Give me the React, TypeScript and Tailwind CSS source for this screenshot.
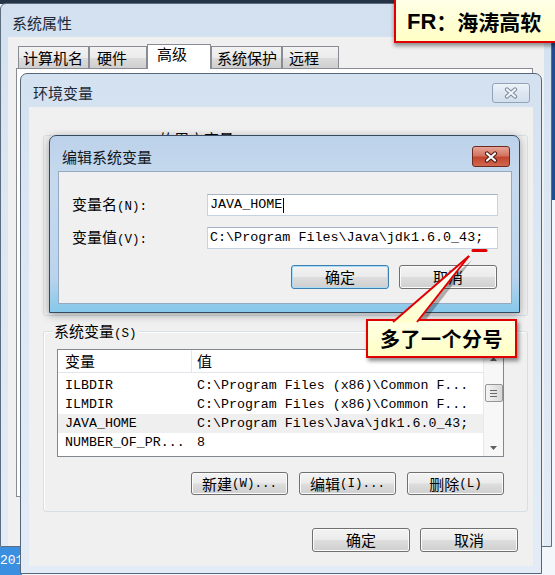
import type { ReactNode } from "react";

const cjk = "font-['Noto_Sans_CJK_SC',sans-serif]";
const mono = "font-['Liberation_Mono','Noto_Sans_CJK_SC',monospace]";

// splits a label into CJK runs and ASCII runs, ASCII gets the narrow mono face
function Txt({ s, lat = "text-[12.5px]" }: { s: string; lat?: string }) {
  const parts = s.match(/[\x00-\x7f]+|[^\x00-\x7f]+/g) ?? [];
  return (
    <>
      {parts.map((p, i) =>
        p.charCodeAt(0) < 128 ? (
          <span key={i} className={`${mono} ${lat} whitespace-pre`}>
            {p}
          </span>
        ) : (
          <span key={i}>{p}</span>
        )
      )}
    </>
  );
}

function Btn({
  label,
  className = "",
  focus = false,
}: {
  label: string;
  className?: string;
  focus?: boolean;
}) {
  return (
    <button
      className={`flex items-center justify-center rounded-[3px] border leading-[18px] text-black bg-[linear-gradient(180deg,#f3f3f3_0%,#ebebeb_48%,#dddddd_52%,#cfcfcf_100%)] ${
        focus
          ? "border-[#3c7fb1] shadow-[inset_0_0_0_1px_#a9dcf6]"
          : "border-[#707070] shadow-[inset_0_0_0_1px_#fbfbfb]"
      } ${className}`}
    >
      <Txt s={label} />
    </button>
  );
}

function CloseX({ active }: { active: boolean }) {
  const d = "M3 2.5 L11 9.5 M11 2.5 L3 9.5";
  return (
    <svg width="14" height="12" viewBox="0 0 14 12">
      <path d={d} stroke={active ? "#4b170c" : "#7d8a9b"} strokeWidth="4.2" strokeLinecap="round" />
      <path d={d} stroke={active ? "#ffffff" : "#f3f6fa"} strokeWidth="2.2" strokeLinecap="round" />
    </svg>
  );
}

function Tab({ children, w, pl, selected = false }: { children: ReactNode; w: string; pl: string; selected?: boolean }) {
  return (
    <div
      className={`${w} ${pl} border border-b-0 border-[#898c95] ${
        selected
          ? "relative z-10 -mb-px h-[25px] bg-white leading-[18px]"
          : "h-[22px] bg-[linear-gradient(180deg,#f2f2f2_0%,#ebebeb_50%,#dddddd_51%,#cfcfcf_100%)] pt-[1px] leading-[20px]"
      }`}
    >
      {children}
    </div>
  );
}

function Arrow({ up }: { up: boolean }) {
  return (
    <svg width="7" height="4" viewBox="0 0 7 4">
      <path d={up ? "M0 4 L3.5 0 L7 4Z" : "M0 0 L3.5 4 L7 0Z"} fill="#5f5f5f" />
    </svg>
  );
}

const ROWS = [
  ["ILBDIR", "C:\\Program Files (x86)\\Common F..."],
  ["ILMDIR", "C:\\Program Files (x86)\\Common F..."],
  ["JAVA_HOME", "C:\\Program Files\\Java\\jdk1.6.0_43;"],
  ["NUMBER_OF_PR...", "8"],
];

export default function App() {
  return (
    <div className={`relative h-[575px] w-[555px] overflow-hidden bg-[#f3f6fa] text-[15px] text-black ${cjk}`}>
      {/* desktop fragments */}
      <div className="absolute left-0 top-0 h-[4px] w-full bg-[#263447]" />
      <div className="absolute right-0 top-0 h-[200px] w-[4px] bg-[#1f4f8e]" />
      <div className="absolute left-0 top-[547px] flex h-[28px] w-[22px] items-center bg-[#3b8fe0] text-white">
        <span className={`${mono} text-[13px]`}>201</span>
      </div>

      {/* 系统属性 */}
      <div className="absolute left-0 top-[3px] flex h-[544px] w-[552px] flex-col rounded-t-[6px] border border-[#5d6d80] bg-[linear-gradient(180deg,#d2e0ef_0%,#dbe6f3_30%,#e2ebf6_100%)]">
        <div className="h-[33px] pl-[11px] pt-[9px] leading-[20px] text-[#1d2836]">系统属性</div>
        <div className="mx-[7px] flex-1 bg-[#f0f0f0] pt-[7px]">
          <div className="ml-[10px] flex h-[24px] items-end">
            <Tab w="w-[71px]" pl="pl-[4px]">计算机名</Tab>
            <Tab w="w-[58px]" pl="pl-[7px]">硬件</Tab>
            <Tab w="w-[64px]" pl="pl-[9px]" selected>
              高级
            </Tab>
            <Tab w="w-[71px]" pl="pl-[5px]">系统保护</Tab>
            <Tab w="w-[57px]" pl="pl-[6px]">远程</Tab>
          </div>
          <div className="ml-[8px] h-[429px] w-[517px] border border-[#898c95] bg-white" />
        </div>
      </div>

      {/* 环境变量 */}
      <div className="absolute left-[20px] top-[73px] flex h-[501px] w-[522px] flex-col rounded-t-[7px] border border-[#56677b] bg-[linear-gradient(180deg,#d3e1f0_0%,#dce7f4_35%,#e3ecf6_100%)]">
        <div className="relative h-[33px] pl-[12px] pt-[9px] leading-[20px] text-[#1d2836]">
          环境变量
          <div className="absolute right-[11px] top-[9px] flex h-[20px] w-[38px] items-center justify-center rounded-[3px] border border-[#93a3b7] bg-[linear-gradient(180deg,#eef3f9_0%,#dde7f2_50%,#d2dfec_100%)]">
            <CloseX active={false} />
          </div>
        </div>
        <div className="mx-[8px] flex h-[459px] flex-col bg-[#f0f0f0]">
          {/* user variables, mostly under the edit dialog */}
          <div className="relative ml-[14px] mt-[28px] h-[181px] w-[485px] rounded-[3px] border border-[#d5dfe5]">
            <span className="absolute -top-[6px] left-[8px] bg-[#f0f0f0] px-[2px] leading-[18px]">
              <Txt s="Administrator 的用户变量(U)" />
            </span>
          </div>

          {/* system variables */}
          <div className="relative ml-[14px] mt-[15px] h-[181px] w-[485px] rounded-[3px] border border-[#d5dfe5] pl-[13px] pt-[17px] shadow-[inset_1px_1px_0_#ffffff]">
            <span className="absolute -top-[10px] left-[8px] bg-[#f0f0f0] px-[2px] leading-[18px]">
              <Txt s="系统变量(S)" />
            </span>
            <div className="flex h-[108px] w-[447px] border border-[#828790] bg-white">
              <div className="flex w-[425px] flex-col">
                <div className="flex h-[23px] border-b border-[#e2e5ea] leading-[20px]">
                  <div className="w-[134px] border-r border-[#e5e5e5] pl-[7px] pt-[1px]">变量</div>
                  <div className="pl-[5px] pt-[1px]">值</div>
                </div>
                <div className="pt-[3px]">
                  {ROWS.map(([name, value]) => (
                    <div
                      key={name}
                      className={`flex h-[19px] items-center ${mono} text-[13.3px] ${
                        name === "JAVA_HOME" ? "bg-[#efefef]" : ""
                      }`}
                    >
                      <span className="w-[139px] whitespace-pre pl-[7px]">{name}</span>
                      <span className="whitespace-pre">{value}</span>
                    </div>
                  ))}
                </div>
              </div>
              <div className="flex w-[20px] flex-col items-center border-l border-[#e8e8e8] bg-[#f7f7f7]">
                <div className="flex h-[17px] w-full items-center justify-center">
                  <Arrow up />
                </div>
                <div className="mt-[17px] flex h-[18px] w-[18px] flex-col items-center justify-center gap-[2px] rounded-[2px] border border-[#979797] bg-[linear-gradient(90deg,#f4f4f4_0%,#e6e6e6_50%,#d8d8d8_100%)]">
                  <div className="h-px w-[7px] bg-[#6b6b6b]" />
                  <div className="h-px w-[7px] bg-[#6b6b6b]" />
                  <div className="h-px w-[7px] bg-[#6b6b6b]" />
                </div>
                <div className="flex-1" />
                <div className="flex h-[17px] w-full items-center justify-center">
                  <Arrow up={false} />
                </div>
              </div>
            </div>
            <div className="mt-[15px] flex justify-end gap-[11px] pr-[23px]">
              <Btn label="新建(W)..." className="h-[23px] w-[97px]" />
              <Btn label="编辑(I)..." className="h-[23px] w-[97px]" />
              <Btn label="删除(L)" className="h-[23px] w-[97px]" />
            </div>
          </div>

          <div className="mt-[16px] flex justify-end gap-[10px] pr-[15px]">
            <Btn label="确定" className="h-[24px] w-[98px]" />
            <Btn label="取消" className="h-[24px] w-[98px]" />
          </div>
        </div>
      </div>

      {/* 编辑系统变量 */}
      <div className="absolute left-[49px] top-[135px] flex h-[178px] w-[471px] flex-col rounded-t-[7px] border border-[#344a63] bg-[linear-gradient(180deg,#bcd2ea_0%,#c6d9ee_25%,#bad4ed_80%,#86c8ea_100%)] shadow-[0_2px_8px_rgba(0,0,0,0.35)]">
        <div className="relative h-[35px] pl-[12px] pt-[11px] leading-[20px] text-[#10161e]">
          编辑系统变量
          <div className="absolute right-[9px] top-[10px] flex h-[21px] w-[38px] items-center justify-center rounded-[3px] border border-[#6e2a1e] bg-[linear-gradient(180deg,#e6a597_0%,#d37462_45%,#c2462f_55%,#d2674f_100%)]">
            <CloseX active />
          </div>
        </div>
        <div className="ml-[8px] mr-[7px] h-[133px] border border-[#95aac1] bg-[#f0f0f0] pt-[22px]">
          <div className="flex h-[22px] items-center">
            <div className="w-[148px] pl-[13px] leading-[20px]">
              <Txt s="变量名(N):" />
            </div>
            <div className={`flex h-[22px] w-[291px] items-center border border-[#c4d2e1] border-t-[#a3b2c4] bg-white pl-[2px] ${mono} text-[13.4px]`}>
              JAVA_HOME
              <span className="ml-px h-[15px] w-px bg-black" />
            </div>
          </div>
          <div className="mt-[11px] flex h-[22px] items-center">
            <div className="w-[148px] pl-[13px] leading-[20px]">
              <Txt s="变量值(V):" />
            </div>
            <div className={`flex h-[22px] w-[291px] items-center whitespace-pre border border-[#c4d2e1] border-t-[#a3b2c4] bg-white pl-[2px] ${mono} text-[13.4px]`}>
              {"C:\\Program Files\\Java\\jdk1.6.0_43;"}
            </div>
          </div>
          <div className="mt-[16px] flex justify-end gap-[10px] pr-[14px]">
            <Btn label="确定" className="h-[24px] w-[98px]" focus />
            <Btn label="取消" className="h-[24px] w-[98px]" />
          </div>
        </div>
      </div>

      {/* callout pointing at the extra semicolon */}
      <svg className="pointer-events-none absolute left-0 top-0" width="555" height="575">
        <polygon points="397,326 472,260 421,326" fill="rgba(0,0,0,0.28)" />
      </svg>
      <div className="absolute left-[366px] top-[319px] flex h-[39px] w-[151px] items-center justify-center border-2 border-[#e00000] bg-[linear-gradient(180deg,#ffffe6_0%,#ffffc4_100%)] text-[20px] font-bold tracking-[0.5px] shadow-[2px_3px_4px_rgba(0,0,0,0.45)]">
        多了一个分号
      </div>
      <svg className="pointer-events-none absolute left-0 top-0" width="555" height="575">
        <defs>
          <linearGradient id="wedge" x1="0" y1="1" x2="1" y2="0">
            <stop offset="0" stopColor="#ffffc8" />
            <stop offset="1" stopColor="#ffffff" />
          </linearGradient>
        </defs>
        <line x1="473" y1="250.5" x2="486" y2="250.5" stroke="#e00000" strokeWidth="3" strokeLinecap="round" />
        <polygon points="393,323 469,256 417,323" fill="url(#wedge)" />
        <line x1="393" y1="322" x2="469" y2="256" stroke="#e00000" strokeWidth="2" />
        <line x1="417" y1="322" x2="469" y2="256" stroke="#e00000" strokeWidth="2" />
      </svg>

      {/* watermark label */}
      <div className="absolute left-[394px] top-[-3px] flex h-[46px] w-[170px] items-center border-2 border-[#e00000] bg-[linear-gradient(180deg,#ffffe8_0%,#ffffc6_100%)] pl-[11px] pt-[3px] text-[21px] font-bold shadow-[0_3px_4px_rgba(0,0,0,0.4)]">
        <span className="font-['Liberation_Sans',sans-serif] text-[22px]">FR</span>
        <span>：海涛高软</span>
      </div>
    </div>
  );
}
